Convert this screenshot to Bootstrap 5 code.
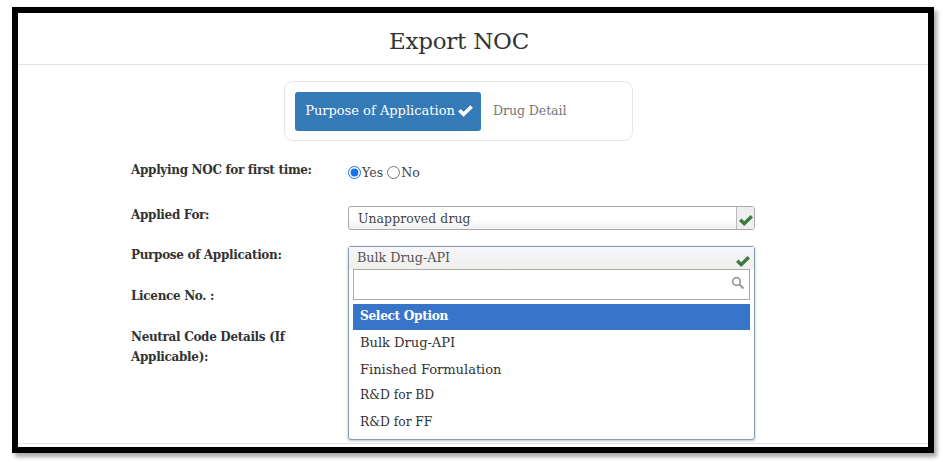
<!DOCTYPE html>
<html lang="en">
<head>
  <meta charset="UTF-8" />
  <meta name="viewport" content="width=device-width, initial-scale=1.0" />
  <title>Export NOC</title>
  <link rel="stylesheet" href="https://cdn.jsdelivr.net/npm/bootstrap@5.3.3/dist/css/bootstrap.min.css" />
  <style>
    html, body { height: 100%; overflow: hidden; background: #fff; }
    body { padding: 7px 9px 0 12px; font-family: "DejaVu Serif", "Liberation Serif", serif; font-size: 12.4px; color: #333; }
    .shot-frame { height: 446px; border: 6px solid #000; box-shadow: 3px 4px 4px #aaa; background: #fff; display: flex; flex-direction: column; }
    .page-head { height: 52px; border-bottom: 1px solid #e3e3e3; font-size: 23px; color: #333; line-height: 1; padding: 17px 28px 0 0; letter-spacing: -.25px; }
    .tab-box { width: 349px; height: 60px; margin: 16px 0 0 266px; padding: 10px; border: 1px solid #e6e6e6; border-radius: 9px; }
    .tab-on { width: 186px; height: 39px; padding-left: 3px; gap: 2px; background: #337ab7; color: #fff; border-radius: 3px; font-size: 13px; }
    .tab-off { color: #777; margin-left: 12px; font-size: 12.6px; letter-spacing: -.1px; }
    .form-wrap { padding-left: 113px; position: relative; flex-grow: 1; }
    .form-line { display: flex; }
    .line-label { width: 217px; flex: none; font-weight: 600; font-size: 12px; line-height: 20px; letter-spacing: -.32px; color: #333; margin-top: -1px; }
    .line-first { margin-top: 20px; height: 45px; }
    .line-second { height: 40px; }
    .line-third { height: 41px; }
    .line-fourth { height: 41px; }
    .radio-set { font-size: 12.6px; line-height: 22px; color: #444; padding-top: 1px; }
    .radio-set input { margin: 0 1px 0 0; width: 13px; height: 13px; vertical-align: -2px; accent-color: #1a73e8; }
    .pick-box { width: 407px; height: 24px; border: 1px solid #a9a9a9; border-radius: 3px; background: linear-gradient(#fff 55%, #efefef); padding: 0 9px; line-height: 24px; font-size: 12.4px; color: #444; position: relative; letter-spacing: .1px; }
    .pick-arrow { position: absolute; right: 0; top: 0; bottom: 0; width: 18px; border-left: 1px solid #bbb; background: #eee; }
    .pick-arrow svg, .pick-open > svg { position: absolute; }
    .pick-arrow svg { left: 1px; top: 7px; }
    .pick-open { position: absolute; left: 217px; top: 0; width: 407px; height: 194px; border: 1px solid #7f9db9; border-radius: 3px; background: #fff; box-shadow: 0 1px 3px rgba(0,0,0,.25); }
    .open-value { height: 22px; line-height: 22px; padding-left: 8px; font-size: 12.8px; color: #555; background: linear-gradient(#f7f7fb, #efefec); letter-spacing: -.05px; }
    .open-search { height: 31px; margin: 0 4px; border: 1px solid #aaa; background: #fff; position: relative; }
    .open-search svg { position: absolute; right: 4px; top: 6px; }
    .open-list { margin: 4px 4px 0; padding: 0; list-style: none; }
    .open-list li { height: 26.4px; line-height: 25px; padding-left: 7px; font-size: 13.1px; color: #333; letter-spacing: -.05px; }
    .open-list li.opt-active { background: #3875c9; color: #fff; font-weight: 600; font-size: 12.2px; letter-spacing: -.35px; }
    .open-list li.opt-short { font-size: 12.3px; }
    .foot-rule { height: 1px; background: #e3e3e3; margin-bottom: 3px; }
  </style>
</head>
<body>
  <div class="shot-frame">
    <div class="page-head text-center">Export NOC</div>
    <div class="tab-box d-flex align-items-center">
      <div class="tab-on d-flex align-items-center justify-content-center">
        Purpose of Application
        <svg width="17" height="14" viewBox="0 0 16 13"><path d="M1 7l2.5-2.5L6.2 7.2 12.6 1 15 3.4 6.2 12z" fill="#fff"/></svg>
      </div>
      <div class="tab-off">Drug Detail</div>
    </div>
    <div class="form-wrap">
      <div class="form-line line-first">
        <div class="line-label">Applying NOC for first time:</div>
        <div class="radio-set"><input type="radio" name="first" checked>Yes <input type="radio" name="first">No</div>
      </div>
      <div class="form-line line-second">
        <div class="line-label">Applied For:</div>
        <div class="pick-box">Unapproved drug
          <span class="pick-arrow"><svg width="16" height="13" viewBox="0 0 16 13"><path d="M1 7l2.5-2.5L6.2 7.2 12.6 1 15 3.4 6.2 12z" fill="#3c7a3c"/></svg></span>
        </div>
      </div>
      <div class="form-line line-third" style="position:relative">
        <div class="line-label">Purpose of Application:</div>
        <div class="pick-open">
          <div class="open-value">Bulk Drug-API</div>
          <svg style="right:3px;top:8px" width="16" height="13" viewBox="0 0 16 13"><path d="M1 7l2.5-2.5L6.2 7.2 12.6 1 15 3.4 6.2 12z" fill="#3c7a3c"/></svg>
          <div class="open-search">
            <svg width="14" height="14" viewBox="0 0 14 14"><circle cx="5.5" cy="5.5" r="3.8" fill="none" stroke="#999" stroke-width="1.7"/><path d="M8.5 8.5l4 4" stroke="#999" stroke-width="2.2"/></svg>
          </div>
          <ul class="open-list">
            <li class="opt-active">Select Option</li>
            <li>Bulk Drug-API</li>
            <li>Finished Formulation</li>
            <li class="opt-short">R&amp;D for BD</li>
            <li class="opt-short">R&amp;D for FF</li>
          </ul>
        </div>
      </div>
      <div class="form-line line-fourth">
        <div class="line-label">Licence No. :</div>
      </div>
      <div class="form-line">
        <div class="line-label" style="width:190px">Neutral Code Details (If Applicable):</div>
      </div>
    </div>
    <div class="foot-rule"></div>
  </div>
  <script src="https://cdn.jsdelivr.net/npm/bootstrap@5.3.3/dist/js/bootstrap.bundle.min.js"></script>
</body>
</html>
